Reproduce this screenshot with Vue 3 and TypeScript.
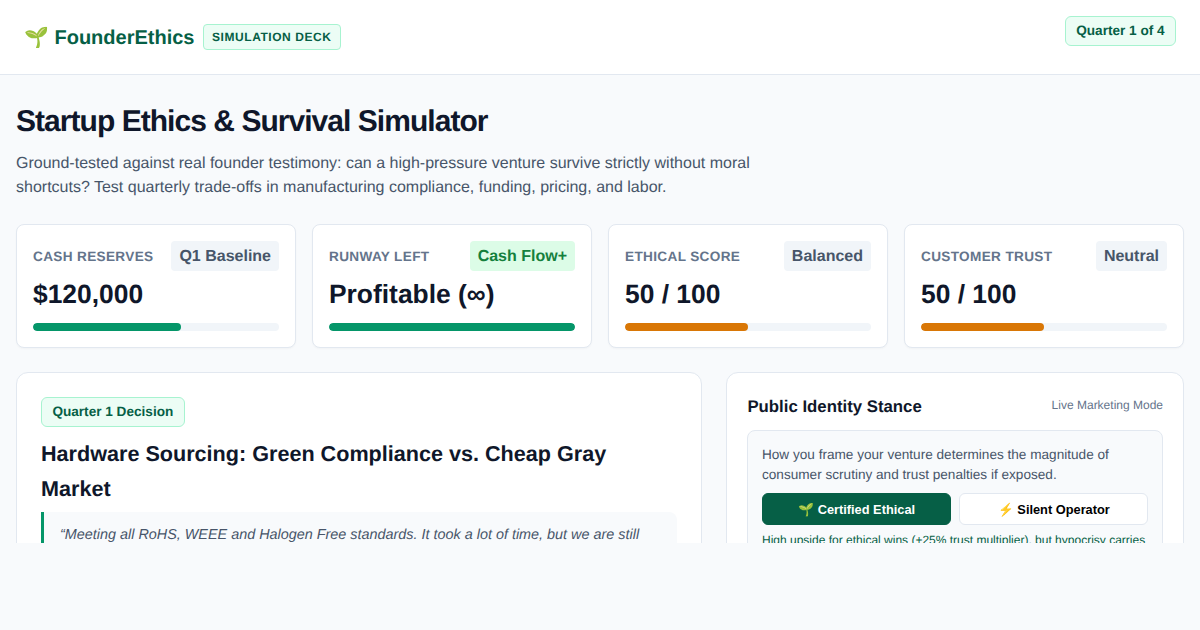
<script setup lang="ts">
interface Stat { label: string; tag: string; value: string; pct: number; good?: boolean; warn?: boolean }
const stats: Stat[] = [
  { label: 'Cash Reserves', tag: 'Q1 Baseline', value: '$120,000', pct: 60 },
  { label: 'Runway Left', tag: 'Cash Flow+', value: 'Profitable (∞)', pct: 100, good: true },
  { label: 'Ethical Score', tag: 'Balanced', value: '50 / 100', pct: 50, warn: true },
  { label: 'Customer Trust', tag: 'Neutral', value: '50 / 100', pct: 50, warn: true },
]
</script>

<template>
  <div class="page">
    <header class="top">
      <div class="brand">
        <span class="logo">🌱 FounderEthics</span>
        <span class="pill deck">SIMULATION DECK</span>
      </div>
      <span class="pill quarter top-quarter">Quarter 1 of 4</span>
    </header>
    <main class="main">
      <h1>Startup Ethics &amp; Survival Simulator</h1>
      <p class="lead">Ground-tested against real founder testimony: can a high-pressure venture survive strictly without moral shortcuts? Test quarterly trade-offs in manufacturing compliance, funding, pricing, and labor.</p>
      <section class="stats">
        <div v-for="s in stats" :key="s.label" class="stat">
          <div class="stat-head">
            <span class="stat-label">{{ s.label }}</span>
            <span class="tag" :class="{ good: s.good }">{{ s.tag }}</span>
          </div>
          <div class="stat-value">{{ s.value }}</div>
          <div class="track">
            <div class="fill" :class="{ warn: s.warn }" :style="{ width: s.pct + '%' }"></div>
          </div>
        </div>
      </section>
      <section class="columns">
        <article class="card decision">
          <span class="pill quarter">Quarter 1 Decision</span>
          <h2>Hardware Sourcing: Green Compliance vs. Cheap Gray Market</h2>
          <blockquote>“Meeting all RoHS, WEEE and Halogen Free standards. It took a lot of time, but we are still</blockquote>
        </article>
        <aside class="card stance">
          <div class="stance-head">
            <h3>Public Identity Stance</h3>
            <span class="mode">Live Marketing Mode</span>
          </div>
          <div class="panel">
            <p class="panel-text">How you frame your venture determines the magnitude of consumer scrutiny and trust penalties if exposed.</p>
            <div class="buttons">
              <button class="btn active">🌱 Certified Ethical</button>
              <button class="btn">⚡ Silent Operator</button>
            </div>
            <p class="note">High upside for ethical wins (+25% trust multiplier), but hypocrisy carries</p>
          </div>
        </aside>
      </section>
    </main>
  </div>
</template>

<style>
body { background: #f8fafc; }
</style>

<style scoped>
.page {
  font-family: "Liberation Sans", Arial, sans-serif;
  text-rendering: geometricPrecision;
  color: #0f172a;
  background: #f8fafc;
  height: 630px;
  overflow: hidden;
}
.top {
  display: flex;
  justify-content: space-between;
  align-items: flex-start;
  height: 74px;
  box-sizing: content-box;
  padding: 0 24px;
  background: #fff;
  border-bottom: 1px solid #e2e8f0;
}
.brand {
  display: flex;
  align-items: flex-start;
  gap: 8.6px;
  margin-top: 24px;
}
.logo {
  font-size: 20px;
  font-weight: 700;
  color: #065f46;
  line-height: 26px;
  padding-top: 1px;
}
.pill {
  display: inline-block;
  box-sizing: border-box;
  background: #ecfdf5;
  border: 1px solid #a7f3d0;
  border-radius: 4px;
  color: #065f46;
  font-weight: 700;
}
.deck {
  font-size: 12px;
  letter-spacing: 0.55px;
  padding: 4px 8.6px 4px 8px;
  height: 26px;
  line-height: 16px;
}
.quarter {
  font-size: 13.6px;
  line-height: 16px;
  padding: 6px 10.4px;
  height: 30px;
  border-radius: 6px;
}
.top-quarter { margin-top: 16px; }
.main {
  height: 468px;
  overflow: hidden;
  padding: 0 16px;
  box-sizing: border-box;
}
h1 {
  margin: 29px 0 0;
  font-size: 30px;
  line-height: 36px;
  font-weight: 700;
  letter-spacing: -0.96px;
}
.lead {
  margin: 12px 0 0;
  max-width: 800px;
  font-size: 16px;
  line-height: 24px;
  color: #475569;
  height: 48px;
}
.stats {
  display: grid;
  grid-template-columns: repeat(4, 1fr);
  gap: 16px;
  margin-top: 24px;
}
.stat {
  box-sizing: border-box;
  height: 124px;
  padding: 16px;
  background: #fff;
  border: 1px solid #e2e8f0;
  border-radius: 8px;
  box-shadow: 0 1px 2px rgba(15, 23, 42, 0.03);
}
.stat-head {
  display: flex;
  justify-content: space-between;
  align-items: center;
  height: 30px;
}
.stat-label {
  font-size: 13.6px;
  font-weight: 700;
  letter-spacing: 0.34px;
  text-transform: uppercase;
  color: #64748b;
}
.tag {
  font-size: 16px;
  font-weight: 700;
  line-height: 22px;
  padding: 5px 8px 3px;
  background: #f1f5f9;
  color: #475569;
  border-radius: 4px;
}
.tag.good {
  background: #dcfce7;
  color: #15803d;
}
.stat-value {
  margin-top: 6px;
  font-size: 26.4px;
  font-weight: 700;
  line-height: 34px;
}
.track {
  margin-top: 12px;
  height: 8px;
  background: #f1f5f9;
  border-radius: 4px;
  overflow: hidden;
}
.fill {
  height: 100%;
  background: #059669;
  border-radius: 4px;
}
.fill.warn { background: #d97706; }
.columns {
  display: grid;
  grid-template-columns: 3fr 2fr;
  gap: 24px;
  margin-top: 24px;
  align-items: start;
}
.card {
  box-sizing: border-box;
  background: #fff;
  border: 1px solid #e2e8f0;
  border-radius: 12px;
  height: 300px;
}
.decision { padding: 24px; }
h2 {
  margin: 10px 0 6px;
  font-size: 21.6px;
  line-height: 34.56px;
  font-weight: 700;
}
blockquote {
  margin: 0;
  padding: 11px 16px;
  background: #f8fafc;
  border-left: 3px solid #059669;
  border-radius: 0 8px 8px 0;
  font-size: 14.4px;
  line-height: 24px;
  font-style: italic;
  color: #475569;
}
.stance { padding: 20px; }
.stance-head {
  display: flex;
  justify-content: space-between;
  align-items: center;
  height: 26px;
}
h3 {
  margin: 0;
  padding-top: 1px;
  font-size: 16.8px;
  font-weight: 700;
}
.mode {
  font-size: 12px;
  color: #64748b;
  margin-top: -2px;
}
.panel {
  margin-top: 11px;
  padding: 14.4px 13.6px;
  background: #f8fafc;
  border: 1px solid #e2e8f0;
  border-radius: 8px;
}
.panel-text {
  margin: 0;
  font-size: 13.6px;
  line-height: 20px;
  color: #475569;
}
.buttons {
  display: grid;
  grid-template-columns: 1fr 1fr;
  gap: 8px;
  margin-top: 7.6px;
}
.btn {
  height: 32px;
  padding: 1px 0 0;
  font-family: inherit;
  font-size: 12.8px;
  font-weight: 700;
  color: #000;
  background: #fff;
  border: 1px solid #e2e8f0;
  border-radius: 6px;
}
.btn.active {
  background: #065f46;
  border-color: #065f46;
  color: #fff;
}
.note {
  margin: 7px 0 0;
  font-size: 12px;
  line-height: 16px;
  color: #065f46;
}
</style>
